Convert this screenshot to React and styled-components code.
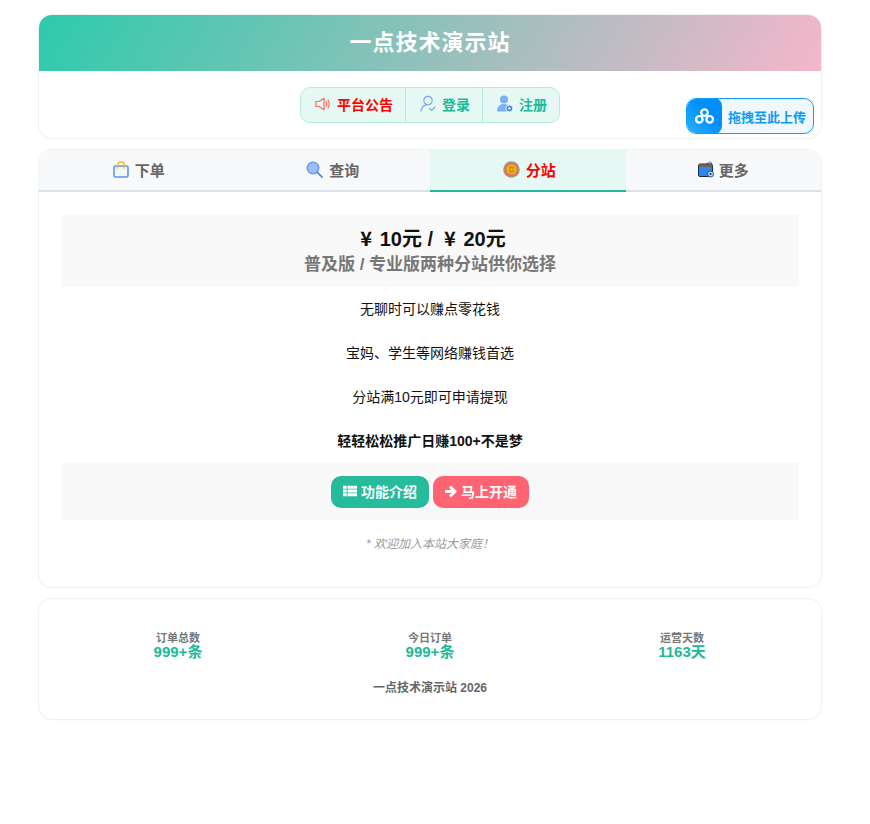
import React from 'react';
import styled, { createGlobalStyle } from 'styled-components';

const Global = createGlobalStyle`
  html, body {
    margin: 0;
    padding: 0;
    background: #fff;
    font-family: "Liberation Sans", "Noto Sans CJK SC", sans-serif;
    color: #111;
  }
  * { box-sizing: border-box; }
`;

const Page = styled.div`
  width: 784px;
  margin-left: 38px;
  padding: 14px 0 104px;
  display: flex;
  flex-direction: column;
  gap: 10px;
`;

const Card = styled.section`
  position: relative;
  background: #fff;
  border: 1px solid #eef2f4;
  border-radius: 14px;
  overflow: hidden;
  box-shadow: 0 1px 3px rgba(0, 0, 0, 0.02);
`;

const Banner = styled.header`
  height: 56px;
  padding-bottom: 6px;
  background: linear-gradient(120deg, #2dcbab 0%, #f5b6cb 100%);
  display: flex;
  align-items: center;
  justify-content: center;
  color: #fff;
  font-size: 22px;
  font-weight: 700;
  letter-spacing: 1px;
`;

const NavRow = styled.div`
  height: 67px;
  padding-top: 16px;
  display: flex;
  justify-content: center;
`;

const NavGroup = styled.div`
  display: flex;
  height: 36px;
  background: #e5f8f3;
  border: 1px solid #b5ecdc;
  border-radius: 10px;
  overflow: hidden;
`;

const NavItem = styled.a`
  display: flex;
  align-items: center;
  gap: 6px;
  padding: 0 12px 3px 14px;
  font-size: 14px;
  font-weight: 700;
  color: ${p => p.$color || '#20b999'};
  & + & { border-left: 1px solid #b5ecdc; }
`;

const UploadBox = styled.a`
  position: absolute;
  left: 647px;
  top: 83px;
  width: 128px;
  height: 36px;
  display: flex;
  align-items: center;
  background: #eff8ff;
  border: 1px solid #0f9dfa;
  border-radius: 10px;
  overflow: hidden;
  color: #0b9cf5;
  font-size: 13px;
  font-weight: 700;
`;

const UploadIcon = styled.span`
  width: 36px;
  height: 36px;
  margin: -1px 6px -1px -1px;
  flex: none;
  display: flex;
  align-items: center;
  justify-content: center;
  background: linear-gradient(45deg, #2cb1ff 0%, #008efb 60%);
  border-radius: 8px;
`;

const Tabs = styled.nav`
  display: grid;
  grid-template-columns: repeat(4, 1fr);
  height: 42px;
  background: #f8f9fb;
`;

const Tab = styled.a`
  display: flex;
  align-items: center;
  justify-content: center;
  gap: ${p => p.$gap || 6}px;
  padding-bottom: 1px;
  padding-left: ${p => p.$indent || 0}px;
  font-size: 15px;
  font-weight: 700;
  color: ${p => (p.$active ? '#ff0000' : '#666')};
  background: ${p => (p.$active ? '#e5f8f3' : 'transparent')};
  border-bottom: 2px solid ${p => (p.$active ? '#20b999' : '#dae1e7')};
`;

const Body = styled.div`
  padding: 23px 22px 34px;
  text-align: center;
`;

const PriceBand = styled.div`
  height: 72px;
  padding-top: 9px;
  background: #f9f9f9;
`;

const Price = styled.div`
  padding-left: 6px;
  margin-bottom: 1px;
  font-size: 20px;
  line-height: 28px;
  font-weight: 700;
  color: #111;
  white-space: pre;
`;

const Yen = styled.span`
  font-family: "Noto Sans CJK SC", sans-serif;
  padding-right: 2px;
`;

const PriceSub = styled.div`
  font-size: 17px;
  line-height: 22px;
  font-weight: 700;
  color: #777;
`;

const Line = styled.p`
  margin: 0;
  height: 44px;
  padding-top: 1px;
  line-height: 42px;
  font-size: 14px;
  font-weight: ${p => (p.$bold ? 700 : 400)};
`;

const ActionBand = styled.div`
  height: 57px;
  display: flex;
  align-items: center;
  justify-content: center;
  gap: 4px;
  background: #f9f9f9;
`;

const Action = styled.a`
  height: 32px;
  padding: 0 12px 1px;
  display: flex;
  align-items: center;
  gap: 4px;
  border-radius: 10px;
  color: #fff;
  font-size: 14px;
  font-weight: 700;
  background: ${p => p.$bg};
`;

const Note = styled.p`
  margin: 15px 0 0;
  font-size: 12px;
  line-height: 18px;
  font-style: italic;
  color: #999;
`;

const Stats = styled.div`
  padding: 33px 13px 22px;
  text-align: center;
`;

const StatGrid = styled.div`
  display: grid;
  grid-template-columns: repeat(3, 1fr);
`;

const StatLabel = styled.div`
  font-size: 11px;
  line-height: 12px;
  font-weight: 700;
  color: #777;
`;

const StatValue = styled.div`
  font-size: 15px;
  line-height: 16px;
  font-weight: 700;
  color: #20b999;
`;

const Copy = styled.div`
  margin-top: 19px;
  font-size: 12px;
  line-height: 18px;
  font-weight: 700;
  color: #666;
`;

const Speaker = () => (
  <svg width="16" height="14" viewBox="0 0 16 14" fill="none" stroke="#fb6b5a" strokeWidth="1.2">
    <path d="M1 4.5h3L9 1.2v11.6L4 9.5H1z" strokeLinejoin="round" />
    <path d="M11 4.5c.9 1.5.9 3.5 0 5M13 3c1.5 2.4 1.5 5.6 0 8" strokeLinecap="round" />
  </svg>
);

const UserCheck = () => (
  <svg width="16" height="17" viewBox="0 0 16 17" fill="none" stroke="#7aa7f5" strokeWidth="1.2" strokeLinecap="round">
    <circle cx="8" cy="5.5" r="4.2" />
    <path d="M1 16c.4-3.5 2.6-5.6 5.2-6.2" />
    <path d="M9.5 13.5l2 2 3.5-3.5" stroke="#5fb8d8" />
  </svg>
);

const UserPlus = () => (
  <svg width="16" height="17" viewBox="0 0 16 17">
    <circle cx="7" cy="4.5" r="4" fill="#7fb0f7" />
    <path d="M0 16.5c0-5 2.8-7.5 7-7.5s7 2.5 7 7.5z" fill="#7fb0f7" />
    <circle cx="12.4" cy="13.4" r="3.4" fill="#3f7fe8" stroke="#e5f8f3" />
    <path d="M11 13.4h2.8M12.4 12v2.8" stroke="#fff" strokeWidth="1" />
  </svg>
);

const Cloud = () => (
  <svg width="19" height="16" viewBox="0 0 22 18" fill="none" stroke="#fff" strokeWidth="2.6">
    <circle cx="11" cy="5" r="3.8" />
    <circle cx="5" cy="12.8" r="3.8" />
    <circle cx="17" cy="12.8" r="3.8" />
  </svg>
);

const Bag = () => (
  <svg width="16" height="17" viewBox="0 0 16 17" fill="none">
    <rect x="1" y="5" width="14" height="11" rx="1.5" fill="#f3f7ff" stroke="#5f93f2" strokeWidth="1.6" />
    <path d="M4.8 7.5V3.5C4.8 2 6 1 8 1s3.2 1 3.2 2.5v4" stroke="#fbb92c" strokeWidth="1.4" />
  </svg>
);

const Search = () => (
  <svg width="17" height="17" viewBox="0 0 17 17" fill="none">
    <circle cx="7" cy="7" r="5.8" fill="#9dbcfa" stroke="#5f93f2" strokeWidth="1.3" />
    <path d="M11 11l5 5" stroke="#3f7ded" strokeWidth="1.7" strokeLinecap="round" />
  </svg>
);

const Coin = () => (
  <svg width="17" height="17" viewBox="0 0 17 17">
    <circle cx="8.5" cy="8.5" r="8.3" fill="#a39a86" />
    <circle cx="8.5" cy="8.5" r="7" fill="#e2735e" />
    <circle cx="8.5" cy="8.5" r="5" fill="#f2b705" />
    <rect x="6.5" y="5.5" width="4" height="6" fill="#b98a1b" />
    <rect x="7.7" y="7" width="1.6" height="3" fill="#f2b705" />
  </svg>
);

const Wallet = () => (
  <svg width="16" height="17" viewBox="0 0 16 17">
    <path d="M8 3l4.5-2.3L14 3z" fill="#fff" stroke="#333" strokeWidth=".6" />
    <rect x="0.5" y="3" width="14" height="12.5" rx="1.5" fill="#2e86f0" stroke="#1d2b3a" />
    <rect x="1" y="3.5" width="13" height="2.4" fill="#8a5a36" />
    <circle cx="12.5" cy="13" r="3" fill="#cfe2f8" stroke="#1d4f86" />
    <circle cx="12.5" cy="13" r="1.2" fill="#1d4f86" />
  </svg>
);

const ListIcon = () => (
  <svg width="14" height="12" viewBox="0 0 14 12" fill="#fff">
    <path d="M0 .8h3.7v3H0zM4.5.8H14v3H4.5zM0 4.5h3.7v3H0zM4.5 4.5H14v3H4.5zM0 8.2h3.7v3H0zM4.5 8.2H14v3H4.5z" />
  </svg>
);

const ArrowIcon = () => (
  <svg width="12" height="13" viewBox="0 0 12 13" fill="none" stroke="#fff" strokeWidth="3">
    <path d="M0 6.5h9.5M5 1.5l5 5-5 5" />
  </svg>
);

const stats = [
  { label: '订单总数', value: '999+条' },
  { label: '今日订单', value: '999+条' },
  { label: '运营天数', value: '1163天' },
];

export default function App() {
  return (
    <Page>
      <Global />
      <Card>
        <Banner>一点技术演示站</Banner>
        <NavRow>
          <NavGroup>
            <NavItem $color="#ff0000"><Speaker />平台公告</NavItem>
            <NavItem><UserCheck />登录</NavItem>
            <NavItem><UserPlus />注册</NavItem>
          </NavGroup>
        </NavRow>
        <UploadBox><UploadIcon><Cloud /></UploadIcon>拖拽至此上传</UploadBox>
      </Card>
      <Card>
        <Tabs>
          <Tab $indent={4}><Bag />下单</Tab>
          <Tab $indent={1}><Search />查询</Tab>
          <Tab $active $indent={3}><Coin />分站</Tab>
          <Tab $gap={5}><Wallet />更多</Tab>
        </Tabs>
        <Body>
          <PriceBand>
            <Price><Yen>¥</Yen> 10元 /  <Yen>¥</Yen> 20元</Price>
            <PriceSub>普及版 / 专业版两种分站供你选择</PriceSub>
          </PriceBand>
          <Line>无聊时可以赚点零花钱</Line>
          <Line>宝妈、学生等网络赚钱首选</Line>
          <Line>分站满10元即可申请提现</Line>
          <Line $bold>轻轻松松推广日赚100+不是梦</Line>
          <ActionBand>
            <Action $bg="#26bc9b"><ListIcon />功能介绍</Action>
            <Action $bg="#ff6472"><ArrowIcon />马上开通</Action>
          </ActionBand>
          <Note>* 欢迎加入本站大家庭！</Note>
        </Body>
      </Card>
      <Card>
        <Stats>
          <StatGrid>
            {stats.map(s => (
              <div key={s.label}>
                <StatLabel>{s.label}</StatLabel>
                <StatValue>{s.value}</StatValue>
              </div>
            ))}
          </StatGrid>
          <Copy>一点技术演示站 2026</Copy>
        </Stats>
      </Card>
    </Page>
  );
}
